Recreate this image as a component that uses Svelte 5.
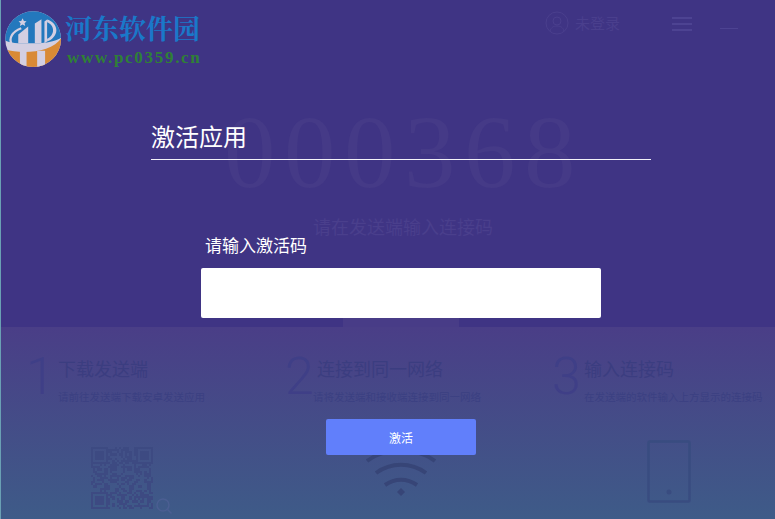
<script lang="ts">
	// pseudo random QR pattern, fixed seed so it stays the same
	const size = 29
	const cells: { x: number; y: number }[] = []
	let seed = 368
	const next = () => {
		seed = (seed * 16807) % 2147483647
		return seed / 2147483647
	}
	const inFinder = (x: number, y: number) =>
		(x < 8 && y < 8) || (x > size - 9 && y < 8) || (x < 8 && y > size - 9)
	for (let y = 0; y < size; y++) {
		for (let x = 0; x < size; x++) {
			if (!inFinder(x, y) && next() > 0.5) cells.push({ x, y })
		}
	}

	const steps = [
		{ num: '1', title: '下载发送端', sub: '请前往发送端下载安卓发送应用', icon: 'qr' },
		{ num: '2', title: '连接到同一网络', sub: '请将发送端和接收端连接到同一网络', icon: 'wifi' },
		{ num: '3', title: '输入连接码', sub: '在发送端的软件输入上方显示的连接码', icon: 'phone' }
	]
</script>

<div class="window">
	<header>
		<svg class="logo" viewBox="15 30 175 175" width="58" height="58">
			<defs>
				<clipPath id="disc"><circle cx="100" cy="115" r="84" /></clipPath>
			</defs>
			<g clip-path="url(#disc)">
				<rect x="10" y="25" width="180" height="180" fill="#d3cfe2" />
				<path d="M10 25h180v82c-20 14-50 20-80 20H55c-15 0-30-3-45-10z" fill="#2378bd" />
				<path d="M190 104C160 160 60 160 10 145v60h180z" fill="#d98a35" />
				<rect x="60" y="150" width="20" height="50" fill="#d3cfe2" />
				<rect x="112" y="150" width="24" height="50" fill="#d3cfe2" />
				<!-- left swoosh -->
				<path d="M64 82C38 92 24 112 36 132" fill="none" stroke="#d3cfe2" stroke-width="7" />
				<!-- the 1 -->
				<path d="M55 127v-26l30-24v50z" fill="#d3cfe2" />
				<!-- the bar and the D -->
				<path d="M105 127V68l20-13v72z" fill="#d3cfe2" />
				<path d="M134 127V62l8-6v66z" fill="#d3cfe2" />
				<path d="M142 56c14 4 28 16 28 32s-14 30-28 34v-8c10-5 18-14 18-26s-8-20-18-24z" fill="#d3cfe2" />
				<path d="M68 52l4 8 8 1-6 6 2 8-8-4-8 4 2-8-6-6 8-1z" fill="#d3cfe2" />
			</g>
		</svg>
		<div class="brand">
			<span class="brand-name">河东软件园</span>
			<span class="brand-url">www.pc0359.cn</span>
		</div>
		<div class="account">
			<svg viewBox="0 0 24 24" width="24" height="24" fill="none" stroke="currentColor">
				<circle cx="12" cy="12" r="11" />
				<circle cx="12" cy="10" r="4" />
				<path d="M5 20c1-4 4-5 7-5s6 1 7 5" />
			</svg>
			<span>未登录</span>
		</div>
		<div class="menu"><i></i><i></i><i></i></div>
		<div class="minimize"></div>
	</header>

	<main>
		<div class="code">000368</div>
		<div class="hint">请在发送端输入连接码</div>
	</main>

	<section class="steps">
		<div class="notch"></div>
		{#each steps as step}
			<div class="step {step.icon}-step">
				<div class="step-head">
					<span class="num">{step.num}</span>
					<div>
						<div class="step-title">{step.title}</div>
						<div class="step-sub">{step.sub}</div>
					</div>
				</div>
				<div class="step-icon">
					{#if step.icon === 'qr'}
						<svg class="qr" viewBox="0 0 29 29" width="62" height="62" shape-rendering="crispEdges">
							{#each [[0, 0], [21, 0], [0, 21]] as [fx, fy]}
								<path d="M{fx} {fy}h8v8h-8zM{fx + 1} {fy + 1}v6h6v-6z" fill-rule="evenodd" />
								<rect x={fx + 2} y={fy + 2} width="4" height="4" />
							{/each}
							{#each cells as c}
								<rect x={c.x} y={c.y} width="1" height="1" />
							{/each}
						</svg>
						<svg class="lens" viewBox="0 0 18 18" width="18" height="18" fill="none" stroke="currentColor" stroke-width="1.500">
							<circle cx="8" cy="8" r="6" />
							<path d="M12.500 12.500l4 4" />
						</svg>
					{:else if step.icon === 'wifi'}
						<svg class="wifi" viewBox="0 0 74 56" width="74" height="56" fill="none" stroke="currentColor" stroke-width="4">
							<path d="M3 14c20-15 48-15 68 0" />
							<path d="M12 26c15-11 35-11 50 0" />
							<path d="M21 38c10-7 22-7 32 0" />
							<path d="M37 41l4 4-4 4-4-4z" fill="currentColor" stroke="none" />
						</svg>
					{:else}
						<svg class="phone" viewBox="0 0 44 63" width="44" height="63" fill="none" stroke="currentColor">
							<rect x="1.500" y="1.500" width="41" height="60" rx="1" stroke-width="2.500" />
							<circle cx="22" cy="52" r="2.500" fill="currentColor" stroke="none" />
						</svg>
					{/if}
				</div>
			</div>
		{/each}
	</section>

	<div class="dialog">
		<h1>激活应用</h1>
		<div class="form">
			<label for="code">请输入激活码</label>
			<input id="code" type="text" />
			<button>激活</button>
		</div>
	</div>
</div>

<style>
	:global(body) {
		margin: 0;
		background: #3f3484;
	}

	.window {
		position: relative;
		display: flex;
		flex-direction: column;
		width: 775px;
		height: 519px;
		overflow: hidden;
		box-sizing: border-box;
		border-left: 1px solid #6aa0b4;
		background: #3f3484;
		font-family: 'Noto Sans CJK SC', 'Liberation Sans', sans-serif;
	}

	header {
		display: flex;
		align-items: flex-start;
		height: 95px;
		padding: 11px 0 0 4px;
		box-sizing: border-box;
		flex-shrink: 0;
	}

	.logo {
		flex-shrink: 0;
	}

	.brand {
		display: flex;
		flex-direction: column;
		width: 480px;
		margin-left: 2px;
		margin-top: -1px;
	}

	.brand-name {
		font-family: 'Noto Serif CJK SC', 'Noto Sans CJK SC', sans-serif;
		font-size: 27px;
		font-weight: 700;
		line-height: 36px;
		color: #1a78c9;
	}

	.brand-url {
		margin: 2px 0 0 2px;
		font-family: 'Liberation Serif', serif;
		font-size: 17px;
		font-weight: 700;
		line-height: 20px;
		letter-spacing: 1.700px;
		color: #2f8036;
	}

	.account {
		display: flex;
		align-items: center;
		gap: 6px;
		width: 79px;
		color: #4a3f8d;
		font-size: 15px;
		line-height: 24px;
	}

	.account svg {
		flex-shrink: 0;
	}

	.menu {
		display: flex;
		flex-direction: column;
		gap: 4px;
		width: 20px;
		margin: 6px 0 0 48px;
	}

	.menu i {
		display: block;
		height: 2px;
		background: #4d4392;
	}

	.minimize {
		width: 18px;
		height: 1px;
		margin: 17px 0 0 28px;
		background: #4d4392;
	}

	main {
		flex: 1;
		display: flex;
		flex-direction: column;
		align-items: center;
	}

	.code {
		margin-top: 2px;
		padding-left: 32px;
		font-family: 'Liberation Serif', serif;
		font-size: 103px;
		line-height: 110px;
		letter-spacing: 8.500px;
		color: #453a87;
	}

	.hint {
		margin-top: 7px;
		padding-left: 30px;
		font-size: 18px;
		line-height: 24px;
		color: #4a3f8c;
	}

	.steps {
		position: relative;
		display: grid;
		grid-template-columns: 259px 267px 1fr;
		height: 192px;
		padding: 0 0 0 25px;
		box-sizing: border-box;
		flex-shrink: 0;
		background: linear-gradient(#4a3e87, #3e5b88);
	}

	.notch {
		position: absolute;
		left: 342px;
		top: -9px;
		width: 116px;
		height: 9px;
		background: #483c87;
	}

	.step {
		display: flex;
		flex-direction: column;
		padding-top: 29px;
	}

	.step-head {
		display: flex;
		height: 57px;
	}

	.num {
		width: 32px;
		flex-shrink: 0;
		margin-top: -4px;
		font-family: 'Roboto', 'Liberation Sans', sans-serif;
		font-size: 52px;
		font-weight: 300;
		line-height: 50px;
		color: #3f3f87;
	}

	.step-title {
		font-size: 18px;
		line-height: 24px;
		color: #3b3d80;
	}

	.step-sub {
		margin-top: 9px;
		font-size: 10.500px;
		line-height: 16px;
		white-space: nowrap;
		color: #3b4082;
	}

	.wifi-step .step-sub {
		margin-left: -4px;
	}

	.step-icon {
		position: relative;
		display: flex;
		justify-content: center;
		margin-top: 34px;
	}

	.qr-step .step-icon {
		padding-right: 68px;
	}

	.wifi-step .step-icon {
		padding-right: 36px;
	}

	.phone-step .step-icon {
		padding-left: 10px;
	}

	.qr {
		fill: #3d4a82;
	}

	.lens {
		position: absolute;
		left: 129px;
		top: 50px;
		color: #4b5e92;
	}

	.wifi {
		color: #374577;
	}

	.phone {
		margin-top: -7px;
		color: #394c80;
	}

	/* dialog floats over the page */
	.dialog {
		position: absolute;
		inset: 0;
		padding-left: 150px;
		display: flex;
		flex-direction: column;
		align-items: flex-start;
	}

	h1 {
		width: 500px;
		margin: 118px 0 0;
		padding-bottom: 6px;
		border-bottom: 1px solid #f2f1f8;
		font-size: 24px;
		font-weight: 400;
		line-height: 35px;
		color: #fff;
	}

	.form {
		display: flex;
		flex-direction: column;
		width: 400px;
		margin: 73px 0 0 50px;
	}

	label {
		padding-left: 4px;
		font-size: 17px;
		line-height: 24px;
		color: #fff;
	}

	input {
		height: 50px;
		margin-top: 11px;
		padding: 0;
		box-sizing: border-box;
		border: 0;
		border-radius: 2px;
		background: #fff;
	}

	button {
		align-self: center;
		width: 150px;
		height: 36px;
		margin-top: 101px;
		border: 0;
		border-radius: 2px;
		background: #617ffb;
		font-family: inherit;
		font-size: 12px;
		color: #fff;
	}
</style>
